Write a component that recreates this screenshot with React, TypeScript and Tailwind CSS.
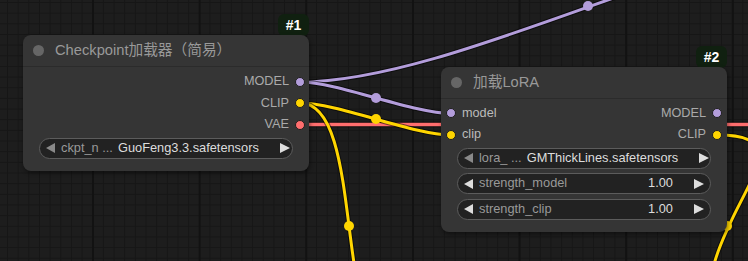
import React from "react";

const FONT = "font-['Liberation_Sans','Noto_Sans_CJK_SC',Arial,sans-serif]";

function LeftArrow({ dim }: { dim?: boolean }) {
  return (
    <svg width="9" height="10" viewBox="0 0 9 10" className="shrink-0">
      <path d="M9 0 L0 5 L9 10 Z" fill={dim ? "#8a8a8a" : "#dddddd"} />
    </svg>
  );
}

function RightArrow() {
  return (
    <svg width="10" height="10" viewBox="0 0 10 10" className="shrink-0">
      <path d="M0 0 L10 5 L0 10 Z" fill="#dddddd" />
    </svg>
  );
}

function Widget({ label, value, dimLeft, mt }: { label: string; value: string; dimLeft?: boolean; mt: string }) {
  return (
    <div
      className={`mx-[16px] ${mt} h-[21px] rounded-full border border-[#5c5c5c] bg-[#222222] flex items-center pl-[6px] pr-[6px] text-[12.8px] leading-none`}
    >
      <LeftArrow dim={dimLeft} />
      <span className="ml-[6px] text-[#999999] whitespace-nowrap">{label}</span>
      <span className="flex-1 min-w-[5px]" />
      <span className="text-[#dddddd] whitespace-nowrap">{value}</span>
      <span className="w-[21px] shrink-0" />
      <RightArrow />
    </div>
  );
}

function Dot({ color }: { color: string }) {
  return (
    <span
      className="w-[10px] h-[10px] rounded-full border border-[#1e1e1e] shrink-0"
      style={{ backgroundColor: color }}
    />
  );
}

function OutSlot({ label, color }: { label: string; color: string }) {
  return (
    <div className="h-[21.5px] flex items-center justify-end gap-[6px] pr-[4px] text-[12.7px] text-[#aaaaaa] leading-none">
      <span>{label}</span>
      <Dot color={color} />
    </div>
  );
}

function Title({ text }: { text: string }) {
  return (
    <div className="h-[32px] flex items-center border-b border-[#2b2b2b] rounded-t-[8px]">
      <span className="ml-[10px] w-[11px] h-[11px] rounded-full bg-[#666666]" />
      <span className="ml-[11px] text-[14.7px] text-[#999999] leading-none whitespace-nowrap">{text}</span>
    </div>
  );
}

function Badge({ text, cls }: { text: string; cls: string }) {
  return (
    <div
      className={`absolute ${cls} w-[31px] h-[22px] rounded-[6px] bg-[#102010] text-white font-bold text-[14px] leading-none flex items-center justify-center pb-[1px]`}
    >
      {text}
    </div>
  );
}

function Wire({ d, color, w = 3 }: { d: string; color: string; w?: number }) {
  return (
    <g>
      <path d={d} stroke="#000000" strokeOpacity={0.55} strokeWidth={w + 2} fill="none" />
      <path d={d} stroke={color} strokeWidth={w} fill="none" />
    </g>
  );
}

export default function App() {
  const purple = "#b39ddb";
  const yellow = "#ffd500";
  const red = "#ff6e6e";
  return (
    <div
      className={`relative w-[748px] h-[261px] overflow-hidden bg-[#1d1d1d] ${FONT} bg-[image:linear-gradient(to_right,#121212_2px,transparent_2px),linear-gradient(to_right,#161616_1px,transparent_1px),linear-gradient(to_bottom,#161616_1px,transparent_1px)] bg-[size:106.67px_100%,10.667px_100%,100%_10.667px] bg-[position:92px_0,7px_0,0_2px]`}
    >
      <svg className="absolute inset-0" width="748" height="261" viewBox="0 0 748 261">
        <Wire d="M300 124.5 L760 124.5" color={red} w={3.5} />
        <Wire d="M300 82 C455 82 715 -65 876 -70" color={purple} />
        <Wire d="M300 82 C338.5 82 412.5 113.5 451 113.5" color={purple} />
        <Wire d="M300 103 C338 103 413 135 451 135" color={yellow} />
        <Wire d="M300 103 C367 103 331 349 398 349" color={yellow} />
        <Wire d="M718 135 C800 135 736 190 715 261 L706 300" color={yellow} />
        <circle cx="588" cy="6" r="5" fill={purple} />
        <circle cx="376" cy="98" r="5" fill={purple} />
        <circle cx="376" cy="119" r="5" fill={yellow} />
        <circle cx="349" cy="226" r="5" fill={yellow} />
        <circle cx="727" cy="226" r="5" fill={yellow} />
      </svg>

      <Badge text="#1" cls="left-[278px] top-[14px]" />
      <Badge text="#2" cls="left-[696px] top-[46px]" />

      {/* Node 1 */}
      <div className="absolute left-[23px] top-[35px] w-[286px] h-[136px] rounded-[8px] bg-[#353535] shadow-[1px_2px_4px_rgba(0,0,0,0.45)]">
        <Title text="Checkpoint加载器（简易）" />
        <div className="pt-[4px]">
          <OutSlot label="MODEL" color={purple} />
          <OutSlot label="CLIP" color={yellow} />
          <OutSlot label="VAE" color={red} />
        </div>
        <Widget label="ckpt_n ..." value="GuoFeng3.3.safetensors" dimLeft mt="mt-[2px]" />
      </div>

      {/* Node 2 */}
      <div className="absolute left-[441px] top-[67px] w-[286px] h-[165px] rounded-[8px] bg-[#353535] shadow-[1px_2px_4px_rgba(0,0,0,0.45)]">
        <Title text="加载LoRA" />
        <div className="pt-[3.5px]">
          <div className="h-[21.5px] flex items-center justify-between text-[12.7px] text-[#aaaaaa] leading-none">
            <div className="flex items-center gap-[6px] pl-[5px]">
              <Dot color={purple} />
              <span className="text-[#bbbbbb]">model</span>
            </div>
            <div className="flex items-center gap-[6px] pr-[5px]">
              <span>MODEL</span>
              <Dot color={purple} />
            </div>
          </div>
          <div className="h-[21.5px] flex items-center justify-between text-[12.7px] text-[#aaaaaa] leading-none">
            <div className="flex items-center gap-[6px] pl-[5px]">
              <Dot color={yellow} />
              <span className="text-[#bbbbbb]">clip</span>
            </div>
            <div className="flex items-center gap-[6px] pr-[5px]">
              <span>CLIP</span>
              <Dot color={yellow} />
            </div>
          </div>
        </div>
        <Widget label="lora_ ..." value="GMThickLines.safetensors" dimLeft mt="mt-[2px]" />
        <Widget label="strength_model" value="1.00" mt="mt-[4.5px]" />
        <Widget label="strength_clip" value="1.00" mt="mt-[4.5px]" />
      </div>
    </div>
  );
}
